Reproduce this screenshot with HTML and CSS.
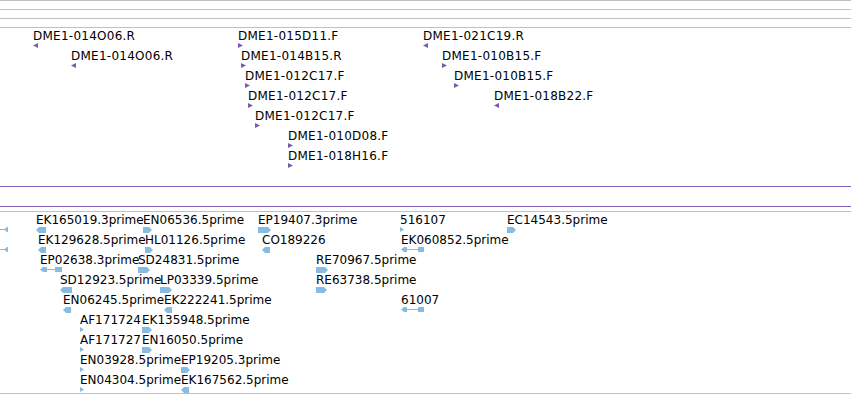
FILE: index.html
```html
<!DOCTYPE html>
<html>
<head>
<meta charset="utf-8">
<link rel="stylesheet" href="styles.css">
</head>
<body>
<div class="view">
  <div class="rule"></div>
  <div class="rule"></div>
  <div class="rule"></div>

  <div class="track track-top">
    <div class="feat" style="left:33px;top:1px"><span class="lbl">DME1-014O06.R</span><svg class="g pu" width="5" height="5"><polygon points="5,0 0,2.5 5,5"/></svg></div>
    <div class="feat" style="left:238px;top:1px"><span class="lbl">DME1-015D11.F</span><svg class="g pu" width="5" height="5"><polygon points="0,0 5,2.5 0,5"/></svg></div>
    <div class="feat" style="left:423px;top:1px"><span class="lbl">DME1-021C19.R</span><svg class="g pu" width="5" height="5"><polygon points="5,0 0,2.5 5,5"/></svg></div>

    <div class="feat" style="left:71px;top:21px"><span class="lbl">DME1-014O06.R</span><svg class="g pu" width="5" height="5"><polygon points="5,0 0,2.5 5,5"/></svg></div>
    <div class="feat" style="left:241px;top:21px"><span class="lbl">DME1-014B15.R</span><svg class="g pu" width="5" height="5"><polygon points="0,0 5,2.5 0,5"/></svg></div>
    <div class="feat" style="left:442px;top:21px"><span class="lbl">DME1-010B15.F</span><svg class="g pu" width="5" height="5"><polygon points="0,0 5,2.5 0,5"/></svg></div>

    <div class="feat" style="left:245px;top:41px"><span class="lbl">DME1-012C17.F</span><svg class="g pu" width="5" height="5"><polygon points="0,0 5,2.5 0,5"/></svg></div>
    <div class="feat" style="left:454px;top:41px"><span class="lbl">DME1-010B15.F</span><svg class="g pu" width="5" height="5"><polygon points="0,0 5,2.5 0,5"/></svg></div>

    <div class="feat" style="left:248px;top:61px"><span class="lbl">DME1-012C17.F</span><svg class="g pu" width="5" height="5"><polygon points="0,0 5,2.5 0,5"/></svg></div>
    <div class="feat" style="left:494px;top:61px"><span class="lbl">DME1-018B22.F</span><svg class="g pu" width="5" height="5"><polygon points="5,0 0,2.5 5,5"/></svg></div>

    <div class="feat" style="left:255px;top:81px"><span class="lbl">DME1-012C17.F</span><svg class="g pu" width="5" height="5"><polygon points="0,0 5,2.5 0,5"/></svg></div>
    <div class="feat" style="left:288px;top:101px"><span class="lbl">DME1-010D08.F</span><svg class="g pu" width="5" height="5"><polygon points="0,0 5,2.5 0,5"/></svg></div>
    <div class="feat" style="left:288px;top:121px"><span class="lbl">DME1-018H16.F</span><svg class="g pu" width="5" height="5"><polygon points="0,0 5,2.5 0,5"/></svg></div>
  </div>

  <div class="divider"></div>

  <div class="track track-bottom">
    <!-- row 0 -->
    <div class="feat" style="left:0;top:1px"><span class="lbl"></span><svg class="g bl" width="8" height="6"><rect x="0" y="2" width="5" height="1"/><polygon points="4,2.5 7,0 8,0 8,5 7,5"/></svg></div>
    <div class="feat" style="left:36px;top:1px"><span class="lbl">EK165019.3prime</span><svg class="g bl" width="10" height="6"><polygon points="0,3 3,0 10,0 10,6 3,6"/></svg></div>
    <div class="feat" style="left:143px;top:1px"><span class="lbl">EN06536.5prime</span><svg class="g bl" width="9" height="6"><polygon points="0,0 6,0 9,3 6,6 0,6"/></svg></div>
    <div class="feat" style="left:258px;top:1px"><span class="lbl">EP19407.3prime</span><svg class="g bl" width="13" height="6"><polygon points="0,0 10,0 13,3 10,6 0,6"/></svg></div>
    <div class="feat" style="left:400px;top:1px"><span class="lbl">516107</span><svg class="g bl" width="4" height="6"><polygon points="0,0 4,2.5 0,5"/></svg></div>
    <div class="feat" style="left:507px;top:1px"><span class="lbl">EC14543.5prime</span><svg class="g bl" width="9" height="6"><polygon points="0,0 6,0 9,3 6,6 0,6"/></svg></div>

    <!-- row 1 -->
    <div class="feat" style="left:0;top:21px"><span class="lbl"></span><svg class="g bl" width="8" height="6"><rect x="0" y="2" width="5" height="1"/><polygon points="4,2.5 7,0 8,0 8,5 7,5"/></svg></div>
    <div class="feat" style="left:38px;top:21px"><span class="lbl">EK129628.5prime</span><svg class="g bl" width="8" height="6"><polygon points="0,3 3,0 8,0 8,6 3,6"/></svg></div>
    <div class="feat" style="left:145px;top:21px"><span class="lbl">HL01126.5prime</span><svg class="g bl" width="8" height="6"><polygon points="0,0 5,0 8,3 5,6 0,6"/></svg></div>
    <div class="feat" style="left:262px;top:21px"><span class="lbl">CO189226</span><svg class="g bl" width="8" height="6"><polygon points="0,3 3,0 8,0 8,6 3,6"/></svg></div>
    <div class="feat" style="left:401px;top:21px"><span class="lbl">EK060852.5prime</span><svg class="g bl" width="23" height="6"><polygon points="0,2.5 3,0 6,0 6,5 3,5"/><rect x="6" y="2" width="12" height="1"/><polygon points="17,0 23,0 23,5 17,5"/></svg></div>

    <!-- row 2 -->
    <div class="feat" style="left:40px;top:41px"><span class="lbl">EP02638.3prime</span><svg class="g bl" width="22" height="6"><polygon points="0,2.5 3,0 7,0 7,5 3,5"/><rect x="7" y="2" width="9" height="1"/><polygon points="15,0 22,0 22,5 15,5"/></svg></div>
    <div class="feat" style="left:138px;top:41px"><span class="lbl">SD24831.5prime</span><svg class="g bl" width="12" height="6"><polygon points="0,0 9,0 12,3 9,6 0,6"/></svg></div>
    <div class="feat" style="left:316px;top:41px"><span class="lbl">RE70967.5prime</span><svg class="g bl" width="12" height="6"><polygon points="0,0 9,0 12,3 9,6 0,6"/></svg></div>

    <!-- row 3 -->
    <div class="feat" style="left:60px;top:61px"><span class="lbl">SD12923.5prime</span><svg class="g bl" width="12" height="6"><polygon points="0,3 3,0 12,0 12,6 3,6"/></svg></div>
    <div class="feat" style="left:160px;top:61px"><span class="lbl">LP03339.5prime</span><svg class="g bl" width="12" height="6"><polygon points="0,0 9,0 12,3 9,6 0,6"/></svg></div>
    <div class="feat" style="left:316px;top:61px"><span class="lbl">RE63738.5prime</span><svg class="g bl" width="11" height="6"><polygon points="0,0 8,0 11,3 8,6 0,6"/></svg></div>

    <!-- row 4 -->
    <div class="feat" style="left:63px;top:81px"><span class="lbl">EN06245.5prime</span><svg class="g bl" width="8" height="6"><polygon points="0,3 3,0 8,0 8,6 3,6"/></svg></div>
    <div class="feat" style="left:164px;top:81px"><span class="lbl">EK222241.5prime</span><svg class="g bl" width="8" height="6"><polygon points="0,3 3,0 8,0 8,6 3,6"/></svg></div>
    <div class="feat" style="left:401px;top:81px"><span class="lbl">61007</span><svg class="g bl" width="23" height="6"><polygon points="0,2.5 3,0 6,0 6,5 3,5"/><rect x="6" y="2" width="12" height="1"/><polygon points="17,0 23,0 23,5 17,5"/></svg></div>

    <!-- row 5 -->
    <div class="feat" style="left:80px;top:101px"><span class="lbl">AF171724</span><svg class="g bl" width="4" height="6"><polygon points="0,0 4,2.5 0,5"/></svg></div>
    <div class="feat" style="left:142px;top:101px"><span class="lbl">EK135948.5prime</span><svg class="g bl" width="10" height="6"><polygon points="0,0 7,0 10,3 7,6 0,6"/></svg></div>

    <!-- row 6 -->
    <div class="feat" style="left:80px;top:121px"><span class="lbl">AF171727</span><svg class="g bl" width="4" height="6"><polygon points="0,0 4,2.5 0,5"/></svg></div>
    <div class="feat" style="left:142px;top:121px"><span class="lbl">EN16050.5prime</span><svg class="g bl" width="10" height="6"><polygon points="0,0 7,0 10,3 7,6 0,6"/></svg></div>

    <!-- row 7 -->
    <div class="feat" style="left:80px;top:141px"><span class="lbl">EN03928.5prime</span><svg class="g bl" width="4" height="6"><polygon points="0,0 4,2.5 0,5"/></svg></div>
    <div class="feat" style="left:181px;top:141px"><span class="lbl">EP19205.3prime</span><svg class="g bl" width="9" height="6"><polygon points="0,0 6,0 9,3 6,6 0,6"/></svg></div>

    <!-- row 8 -->
    <div class="feat" style="left:80px;top:161px"><span class="lbl">EN04304.5prime</span><svg class="g bl" width="4" height="6"><polygon points="0,0 4,2.5 0,5"/></svg></div>
    <div class="feat" style="left:181px;top:161px"><span class="lbl">EK167562.5prime</span><svg class="g bl" width="8" height="6"><polygon points="0,3 3,0 8,0 8,6 3,6"/></svg></div>
  </div>
</div>
</body>
</html>
```

FILE: styles.css
```css
html, body {
  margin: 0;
  padding: 0;
  background: #ffffff;
}

.view {
  width: 851px;
  height: 395px;
  overflow: hidden;
  font-family: "DejaVu Sans", "Liberation Sans", sans-serif;
  font-size: 12px;
  color: #000000;
}

.rule {
  height: 8px;
  border-top: 1px solid #c0c0c0;
}

.track {
  position: relative;
  overflow: hidden;
}

.track-top {
  height: 158px;
  border-top: 1px solid #c0c0c0;
}

.track-top .lbl {
  letter-spacing: 0.25px;
}

.divider {
  height: 19px;
  border-top: 1px solid #7f60b4;
  border-bottom: 1px solid #7f60b4;
}

.track-bottom {
  margin-top: 4px;
  height: 181px;
  border-top: 1px solid #c0c0c0;
  border-bottom: 1px solid #c0c0c0;
}

.feat {
  position: absolute;
  display: flex;
  flex-direction: column;
  align-items: flex-start;
}

.lbl {
  display: block;
  height: 14px;
  line-height: 14px;
  white-space: nowrap;
}

.g {
  display: block;
}

.pu {
  fill: #7a5aae;
}

.bl {
  fill: #86bce2;
}
```
